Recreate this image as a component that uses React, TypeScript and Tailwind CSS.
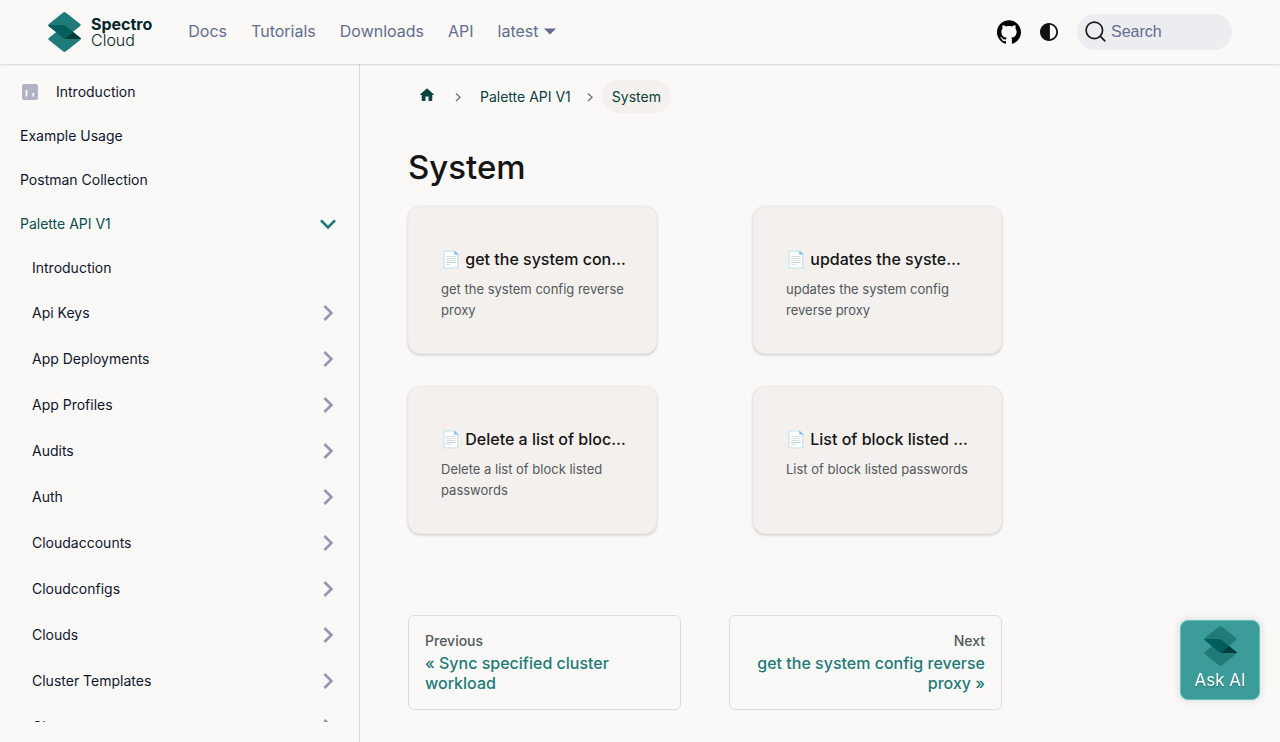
import React from "react";

const categories = [
  "Api Keys",
  "App Deployments",
  "App Profiles",
  "Audits",
  "Auth",
  "Cloudaccounts",
  "Cloudconfigs",
  "Clouds",
  "Cluster Templates",
  "Clusters",
];

const cards = [
  { title: "get the system config reverse proxy", text: "get the system config reverse proxy" },
  { title: "updates the system config reverse proxy", text: "updates the system config reverse proxy" },
  { title: "Delete a list of block listed passwords", text: "Delete a list of block listed passwords" },
  { title: "List of block listed passwords", text: "List of block listed passwords" },
];

function LogoMark({ className }: { className: string }) {
  return (
    <svg viewBox="0 0 33 40" className={className} aria-hidden="true">
      <path d="M15.3 .5Q16.5-.4 17.7 .5L32.2 12Q33.2 13 32.2 14L16.5 26.5.8 14Q-.2 13 .8 12Z" fill="#1f7a78" />
      <path d="M15.3 39.5Q16.5 40.4 17.7 39.5L32.2 28Q33.2 27 32.2 26L16.5 13.5.8 26Q-.2 27 .8 28Z" fill="#1f7a78" />
      <path d="M0 13H14.500Q16.500 13 18 14.200L32.400 26Q33.400 27 32 27H18.500Q16.500 27 15 25.800L.8 14.200Z" fill="#005e5d" />
      <path d="M25 20L32.400 26Q33.400 27 32 27H17.500Z" fill="#043b3a" />
    </svg>
  );
}

function Chevron({ className }: { className: string }) {
  return (
    <svg viewBox="0 0 24 24" className={className} fill="currentColor" aria-hidden="true">
      <path d="M8.590 16.590 13.170 12 8.590 7.410 10 6l6 6-6 6z" />
    </svg>
  );
}

function Header() {
  const link = "text-[#636c8f] hover:text-[#1f7a78]";
  return (
    <header className="sticky top-0 z-10 flex h-16 items-center justify-between bg-[#faf9f7] px-12 shadow-[0_1px_2px_0_rgba(0,0,0,0.15)]">
      <div className="flex items-center">
        <a href="#home" className="mr-9 flex items-center gap-[10px] text-[#04262a]">
          <LogoMark className="h-10 w-[33px]" />
          <span className="flex flex-col text-base leading-4">
            <span className="font-bold">Spectro</span>
            <span className="font-light">Cloud</span>
          </span>
        </a>
        <nav className="flex items-center gap-6 pb-0.5">
          <a href="#docs" className={link}>Docs</a>
          <a href="#tutorials" className={link}>Tutorials</a>
          <a href="#downloads" className={link}>Downloads</a>
          <a href="#api" className={link}>API</a>
          <button type="button" className="flex items-center gap-1 text-[#636c8f]">
            latest
            <svg viewBox="0 0 14 7" className="h-[7px] w-[14px]" fill="currentColor" aria-hidden="true">
              <path d="M1 0.500h12L7 6.500z" />
            </svg>
          </button>
        </nav>
      </div>
      <div className="flex items-center">
        <a href="#github" aria-label="GitHub repository" className="mr-4">
          <svg viewBox="0 0 24 24" className="size-6" aria-hidden="true">
            <path d="M12 .297c-6.630 0-12 5.373-12 12 0 5.303 3.438 9.800 8.205 11.385.6.113.82-.258.82-.577 0-.285-.01-1.040-.015-2.040-3.338.724-4.042-1.610-4.042-1.610C4.422 18.070 3.633 17.700 3.633 17.700c-1.087-.744.084-.729.084-.729 1.205.084 1.838 1.236 1.838 1.236 1.070 1.835 2.809 1.305 3.495.998.108-.776.417-1.305.76-1.605-2.665-.3-5.466-1.332-5.466-5.930 0-1.310.465-2.380 1.235-3.220-.135-.303-.54-1.523.105-3.176 0 0 1.005-.322 3.300 1.230.96-.267 1.980-.399 3-.405 1.020.006 2.040.138 3 .405 2.280-1.552 3.285-1.230 3.285-1.230.645 1.653.24 2.873.12 3.176.765.84 1.230 1.910 1.230 3.220 0 4.610-2.805 5.625-5.475 5.920.42.36.81 1.096.81 2.220 0 1.606-.015 2.896-.015 3.286 0 .315.21.69.825.57C20.565 22.092 24 17.592 24 12.297c0-6.627-5.373-12-12-12" />
          </svg>
        </a>
        <button type="button" aria-label="Switch colour mode" className="mr-4">
          <svg viewBox="0 0 24 24" className="size-6" aria-hidden="true">
            <path
              fill="#111111"
              d="M12,22c5.520,0,10-4.480,10-10S17.520,2,12,2S2,6.480,2,12S6.480,22,12,22z M13,4.070c3.940,0.490,7,3.850,7,7.930s-3.050,7.440-7,7.930V4.070z"
              transform="translate(1.200 1.200) scale(.9)"
            />
          </svg>
        </button>
        <button
          type="button"
          className="flex h-9 w-[155px] items-center gap-1 rounded-full bg-[#ebedf0] px-2 font-['Liberation_Sans',sans-serif] text-[#636c8f]"
        >
          <svg viewBox="0 0 20 20" className="size-[22px]" fill="none" stroke="#16181d" strokeWidth="1.500" strokeLinecap="round" aria-hidden="true">
            <circle cx="8.500" cy="8.500" r="7.500" />
            <path d="m14 14 4 4" />
          </svg>
          <span>Search</span>
        </button>
      </div>
    </header>
  );
}

function Sidebar() {
  const row = "flex h-11 items-center";
  return (
    <aside className="sticky top-16 h-[calc(100vh-64px)] w-[360px] shrink-0 border-r border-[#dadde1] pb-5">
      <nav aria-label="Docs sidebar" className="h-full overflow-y-auto pt-1.5 pr-[15px] pl-5 text-sm text-[#10162f] [scrollbar-width:none]">
        <a href="#introduction" className={row}>
          <svg viewBox="0 0 20 20" className="mr-4 size-5" aria-hidden="true">
            <rect x="2" y="2" width="16" height="16" rx="2" fill="#b0b3c4" />
            <path d="M6.500 8v6.500M13.300 11v3.500" stroke="#fff" strokeWidth="1.700" />
          </svg>
          Introduction
        </a>
        <a href="#example-usage" className={row}>Example Usage</a>
        <a href="#postman" className={row}>Postman Collection</a>
        <button type="button" aria-expanded="true" className="flex h-11 w-full items-center justify-between text-[#07504f]">
          Palette API V1
          <Chevron className="size-8 rotate-90 text-[#1f7a78]" />
        </button>
        <div className="pl-3">
          <a href="#palette-introduction" className={row}>Introduction</a>
          {categories.map((name) => (
            <button key={name} type="button" className="flex h-[46px] w-full items-center justify-between">
              {name}
              <Chevron className="size-8 text-[#9599b0]" />
            </button>
          ))}
        </div>
      </nav>
    </aside>
  );
}

function Separator() {
  return (
    <svg viewBox="0 0 8 10" className="h-[10px] w-2" fill="none" stroke="#777777" strokeWidth="1.400" aria-hidden="true">
      <path d="m2 1.500 4 3.800-4 3.800" />
    </svg>
  );
}

function Breadcrumbs() {
  return (
    <nav aria-label="Breadcrumbs" className="flex items-center text-sm text-[#0b3f40]">
      <a href="#home" aria-label="Home page" className="mr-[18px] ml-[10px] pb-1">
        <svg viewBox="0 0 24 24" className="size-[18px]" fill="#0b4543" aria-hidden="true">
          <path d="M10 19v-5h4v5c0 .550.450 1 1 1h3c.550 0 1-.450 1-1v-7h1.700c.460 0 .680-.570.330-.870L12.670 3.600c-.380-.340-.960-.340-1.340 0l-8.360 7.530c-.340.300-.130.870.330.870H5v7c0 .550.450 1 1 1h3c.550 0 1-.450 1-1z" />
        </svg>
      </a>
      <Separator />
      <a href="#palette-api" className="pr-[15px] pl-[18px]">Palette API V1</a>
      <Separator />
      <span className="ml-2 rounded-full bg-[#f4f0ed] px-[10px] py-[6px] leading-[21px]">System</span>
    </nav>
  );
}

export default function App() {
  const pageLink = "rounded-md border border-[#dadde1] p-4";
  const pageLabel = "mb-[3px] text-sm leading-[18px] font-medium text-[#525860]";
  return (
    <div className="min-h-screen bg-[#faf9f7] font-['Inter',sans-serif] text-base text-[#1c1e21]">
      <Header />
      <div className="flex">
        <Sidebar />
        <div className="flex min-w-0 flex-1 px-12 pt-4 pb-8">
          <main className="min-w-0 flex-1">
            <Breadcrumbs />
            <h1 className="mt-[33px] mb-[17px] text-[33px] leading-[43px] font-medium text-[#151515]">System</h1>
            <section className="grid grid-cols-2 gap-x-24 gap-y-8">
              {cards.map((card) => (
                <a
                  key={card.title}
                  href="#card"
                  className="rounded-xl border border-[#ebedf0] bg-[#f4f0ed] py-8 pr-7 pl-8 shadow-[0_1px_3px_0_rgba(0,0,0,0.2)]"
                >
                  <h2 className="truncate leading-10 font-medium text-[#151515]">📄 {card.title}</h2>
                  <p className="text-[13px] leading-[21px] text-[#525860]">{card.text}</p>
                </a>
              ))}
            </section>
            <nav aria-label="Docs pages" className="mt-[81px] grid grid-cols-2 gap-12">
              <a href="#previous" className={pageLink}>
                <div className={pageLabel}>Previous</div>
                <div className="leading-5 font-medium text-[#1f7a78]">« Sync specified cluster workload</div>
              </a>
              <a href="#next" className="rounded-md border border-[#dadde1] p-4 text-right">
                <div className={pageLabel}>Next</div>
                <div className="leading-5 font-medium text-[#1f7a78]">get the system config reverse proxy »</div>
              </a>
            </nav>
          </main>
          <div className="w-[230px] shrink-0" />
        </div>
      </div>
      <button
        type="button"
        className="fixed right-5 bottom-[42px] flex size-20 flex-col items-center justify-between rounded-lg border border-[#5cc4bb] bg-[#3c9c99] pt-[5px] pb-[7px] text-[17px] leading-6 text-white shadow-[0_0_8px_rgba(0,0,0,0.15)]"
      >
        <LogoMark className="h-10 w-[33px]" />
        <span className="text-shadow-sm">Ask AI</span>
      </button>
    </div>
  );
}
